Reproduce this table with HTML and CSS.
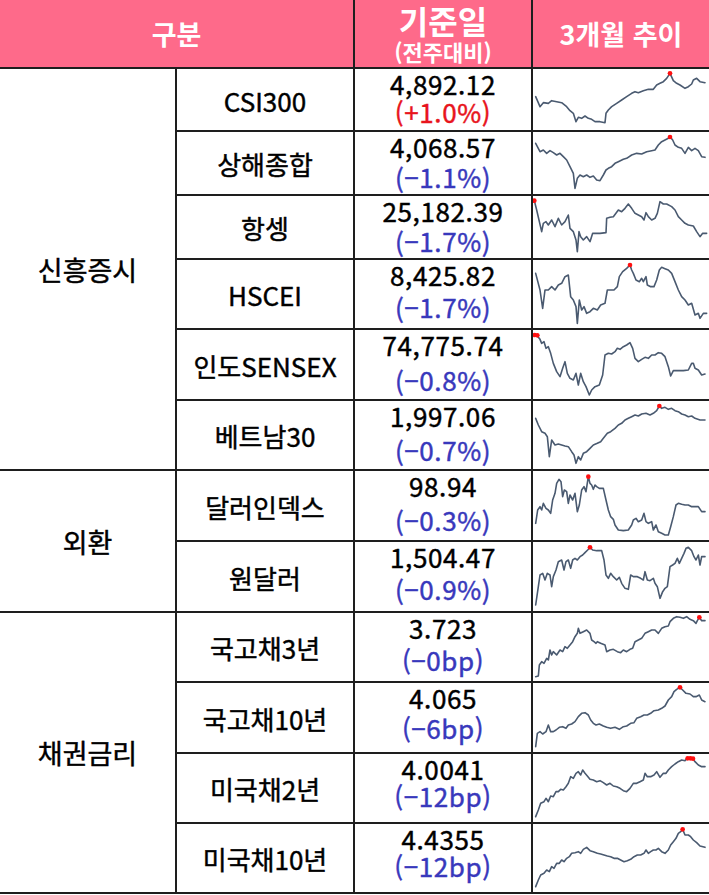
FILE: index.html
```html
<!DOCTYPE html>
<html lang="ko">
<head>
<meta charset="utf-8">
<title>주간 시장 동향</title>
<link rel="stylesheet" href="styles.css">
</head>
<body>
<div class="grid">
  <div class="h h-cat">구분</div>
  <div class="h h-date"><span class="main">기준일</span><span class="sub">(전주대비)</span></div>
  <div class="h">3개월 추이</div>

  <div class="cat cat-eq">신흥증시</div>
  <div class="cat cat-fx">외환</div>
  <div class="cat cat-bond">채권금리</div>

  <!-- row 1 -->
  <div class="name">CSI300</div>
  <div class="val"><span>4,892.12</span><span class="chg up g-28">(+1.0%)</span></div>
  <div class="spark"><svg viewBox="519 27 528 183" preserveAspectRatio="none"><polyline points="527,110 540,140 550,128 565,130 575,122 590,125 605,128 620,140 630,152 640,160 648,185 655,172 665,175 675,168 685,175 695,178 705,185 720,185 735,188 738,160 745,150 755,140 770,130 785,120 800,110 815,100 825,95 835,98 850,92 865,88 880,88 890,75 900,70 910,65 920,55 930,40 940,62 950,70 960,75 975,85 985,80 995,72 1000,60 1010,55 1020,65 1035,68"/><circle cx="930" cy="40" r="7"/></svg></div>

  <!-- row 2 -->
  <div class="name">상해종합</div>
  <div class="val"><span>4,068.57</span><span class="chg dn">(−1.1%)</span></div>
  <div class="spark"><svg viewBox="519 216 528 186" preserveAspectRatio="none"><polyline points="527,250 540,275 550,270 560,280 570,272 580,278 590,285 600,280 610,290 620,300 630,320 640,340 645,385 652,355 660,345 670,350 680,345 690,352 700,348 710,360 720,362 730,345 738,330 745,325 755,320 765,310 775,305 790,298 800,295 815,285 830,280 845,282 860,275 875,272 885,270 895,255 905,245 915,240 925,235 930,230 938,240 945,255 955,262 965,265 975,280 985,262 995,272 1005,265 1015,272 1025,290 1035,292"/><circle cx="930" cy="231" r="7"/></svg></div>

  <!-- row 3 -->
  <div class="name">항셍</div>
  <div class="val"><span>25,182.39</span><span class="chg dn">(−1.7%)</span></div>
  <div class="spark"><svg viewBox="519 18 528 186" preserveAspectRatio="none"><polyline points="523,32 530,60 545,125 550,100 558,95 565,105 575,90 585,110 595,85 605,105 615,95 625,75 630,115 640,125 648,150 652,185 657,125 662,140 670,150 680,140 690,155 698,130 708,130 720,130 738,128 740,85 750,82 760,80 775,60 785,65 795,55 805,42 815,55 825,70 835,75 845,80 852,90 858,68 865,80 875,90 885,85 892,70 900,35 910,42 920,42 935,50 945,60 955,80 965,90 975,100 985,105 1000,108 1010,125 1020,140 1028,130 1040,130"/><circle cx="523" cy="32" r="7"/></svg></div>

  <!-- row 4 -->
  <div class="name">HSCEI</div>
  <div class="val"><span>8,425.82</span><span class="chg dn g-32">(−1.7%)</span></div>
  <div class="spark"><svg viewBox="519 210 528 204" preserveAspectRatio="none"><polyline points="527,250 540,300 548,355 555,300 565,300 575,290 585,300 595,285 605,280 615,260 625,255 632,320 640,330 648,350 652,400 658,330 665,360 672,350 680,370 690,365 700,355 712,360 722,345 735,340 742,300 752,300 762,300 772,290 778,260 788,245 800,235 810,225 815,240 820,250 828,270 838,275 845,265 850,275 858,260 862,285 872,290 882,290 890,270 898,240 905,232 915,236 925,240 935,250 945,275 955,300 965,320 975,330 985,345 995,340 1005,375 1015,370 1020,385 1030,370 1040,370"/><circle cx="810" cy="225" r="7"/></svg></div>

  <!-- row 5 -->
  <div class="name">인도SENSEX</div>
  <div class="val"><span>74,775.74</span><span class="chg dn g-35">(−0.8%)</span></div>
  <div class="spark"><svg viewBox="519 30 528 207" preserveAspectRatio="none"><polyline points="522,45 532,48 540,58 545,70 552,65 558,85 565,80 572,100 580,130 590,155 600,170 608,145 615,125 622,160 630,175 640,180 648,160 655,195 662,160 670,185 678,200 688,225 695,210 705,200 718,195 728,165 735,105 745,100 755,102 765,95 772,85 780,88 790,80 800,75 810,68 818,85 825,115 835,125 845,118 855,112 865,115 875,105 885,105 895,98 905,100 915,110 925,140 932,168 940,152 955,152 970,152 985,150 995,130 1000,130 1005,145 1015,150 1025,165 1035,162"/><circle cx="524" cy="45" r="7"/><circle cx="532" cy="46" r="7"/></svg></div>

  <!-- row 6 -->
  <div class="name">베트남30</div>
  <div class="val"><span>1,997.06</span><span class="chg dn g-34">(−0.7%)</span></div>
  <div class="spark"><svg viewBox="519 243 528 204" preserveAspectRatio="none"><polyline points="527,295 535,315 545,335 555,340 562,350 568,410 575,360 585,375 595,372 605,375 615,378 625,380 635,395 642,405 648,430 655,410 662,420 670,400 680,395 690,385 700,375 712,370 722,365 730,355 742,340 752,335 765,325 775,315 785,310 795,300 805,295 815,290 825,285 835,288 845,282 858,280 870,285 880,280 890,272 898,258 905,265 915,262 925,268 935,265 945,272 955,275 965,282 975,285 985,290 995,288 1005,295 1020,300 1035,300"/><circle cx="898" cy="258" r="7"/></svg></div>

  <!-- row 7 -->
  <div class="name">달러인덱스</div>
  <div class="val"><span>98.94</span><span class="chg dn g-34">(−0.3%)</span></div>
  <div class="spark"><svg viewBox="519 33 528 207" preserveAspectRatio="none"><polyline points="527,190 533,150 540,140 545,150 550,130 558,145 565,150 572,160 578,120 585,100 590,70 597,58 603,65 608,110 613,90 620,95 625,130 630,105 638,120 645,100 652,155 658,135 665,90 672,80 678,95 685,50 690,70 695,75 700,88 705,75 710,80 718,85 730,85 738,120 745,150 752,170 760,178 765,195 775,210 790,212 805,210 815,195 820,180 828,175 835,185 845,180 852,160 858,185 865,190 875,185 880,210 888,195 895,215 905,220 915,225 925,225 932,200 940,170 948,135 955,130 965,133 975,135 985,135 995,140 1005,140 1015,140 1025,155 1035,155"/><circle cx="685" cy="50" r="7"/></svg></div>

  <!-- row 8 -->
  <div class="name">원달러</div>
  <div class="val"><span>1,504.47</span><span class="chg dn g-32">(−0.9%)</span></div>
  <div class="spark"><svg viewBox="519 246 528 207" preserveAspectRatio="none"><polyline points="527,435 535,380 540,345 548,340 555,360 562,340 570,345 575,380 580,350 588,330 595,305 605,300 612,330 618,305 625,300 632,325 638,300 645,295 652,300 660,290 668,285 675,278 683,270 690,262 698,270 710,272 725,272 732,300 738,345 745,355 752,340 760,350 770,360 778,352 785,370 795,385 805,388 812,345 820,350 832,350 842,355 850,360 855,335 862,360 870,362 880,355 885,370 892,380 900,415 908,395 915,385 922,380 930,320 938,315 945,310 952,295 958,310 965,295 972,280 978,265 985,262 995,272 1002,290 1008,300 1015,285 1020,315 1025,290 1035,290"/><circle cx="690" cy="262" r="7"/></svg></div>

  <!-- row 9 -->
  <div class="name">국고채3년</div>
  <div class="val"><span>3.723</span><span class="chg dn g-32">(−0bp)</span></div>
  <div class="spark"><svg viewBox="519 39 528 204" preserveAspectRatio="none"><polyline points="527,230 535,228 538,195 545,185 552,190 560,175 565,180 570,150 575,165 580,155 590,165 600,150 608,155 615,140 622,145 630,135 638,125 645,110 652,100 655,85 660,100 670,95 680,90 690,100 695,120 702,125 708,130 712,125 722,130 735,135 740,155 750,150 760,148 772,155 782,158 790,150 800,155 810,148 818,145 825,125 835,120 845,115 855,100 865,95 875,90 885,90 895,100 905,85 915,80 925,78 930,65 940,55 950,50 960,52 970,55 980,50 990,58 1000,62 1008,70 1012,62 1018,52 1025,62 1035,62"/><circle cx="1018" cy="52" r="7"/></svg></div>

  <!-- row 10 -->
  <div class="name">국고채10년</div>
  <div class="val"><span>4.065</span><span class="chg dn">(−6bp)</span></div>
  <div class="spark"><svg viewBox="519 249 528 207" preserveAspectRatio="none"><polyline points="527,440 532,400 540,395 548,402 558,395 565,375 572,395 580,395 588,390 598,382 608,380 618,385 625,375 635,372 645,365 655,350 665,340 675,338 685,345 692,360 700,370 708,375 718,372 730,378 740,382 752,385 765,382 778,388 790,380 800,378 812,370 822,368 830,355 842,350 852,345 862,345 872,340 882,332 895,330 905,325 915,318 925,300 935,290 942,275 950,268 960,262 968,270 978,280 990,282 1000,290 1008,290 1018,285 1025,300 1035,305"/><circle cx="960" cy="262" r="7"/></svg></div>

  <!-- row 11 -->
  <div class="name">미국채2년</div>
  <div class="val"><span>4.0041</span><span class="chg dn g-27">(−12bp)</span></div>
  <div class="spark"><svg viewBox="519 42 528 204" preserveAspectRatio="none"><polyline points="527,230 535,210 542,190 552,185 558,175 565,185 572,168 580,170 588,155 595,155 602,148 610,150 618,140 625,130 632,110 640,115 648,100 655,95 662,105 668,90 675,100 682,108 690,118 700,120 710,125 720,122 730,128 740,135 750,130 760,138 770,140 780,145 790,152 800,155 810,145 820,130 830,130 840,125 850,120 855,100 862,110 872,110 882,105 890,95 900,112 910,100 918,100 925,90 935,80 945,72 955,65 965,60 975,62 982,55 988,55 995,55 1000,58 1005,65 1015,75 1025,80 1035,80"/><circle cx="983" cy="55" r="7"/><circle cx="991" cy="55" r="7"/><circle cx="999" cy="56" r="7"/></svg></div>

  <!-- row 12 -->
  <div class="name">미국채10년</div>
  <div class="val"><span>4.4355</span><span class="chg dn g-27">(−12bp)</span></div>
  <div class="spark"><svg viewBox="519 252 528 204" preserveAspectRatio="none"><polyline points="527,440 535,420 542,405 552,400 560,390 568,395 575,380 582,385 590,370 598,370 605,360 612,365 620,355 628,350 635,340 645,338 655,335 662,340 670,328 680,322 690,332 700,335 712,340 722,342 732,345 742,348 752,350 762,355 772,355 782,360 792,365 802,362 812,358 822,350 832,345 842,345 852,340 858,330 865,340 872,335 880,330 888,330 895,325 905,335 915,340 925,330 932,315 940,305 948,295 955,280 962,275 968,268 975,285 985,285 992,290 1000,300 1010,308 1020,318 1035,322"/><circle cx="968" cy="268" r="7"/></svg></div>
</div>
</body>
</html>
```

FILE: styles.css
```css
html, body {
  margin: 0;
  padding: 0;
  background: #ffffff;
}

body {
  font-family: "Noto Sans CJK KR", "Noto Sans", sans-serif;
  font-weight: 400;
  color: #000000;
}

.grid {
  display: grid;
  grid-template-columns: 175px 176px 176px 176px;
  grid-template-rows: 67px 61px 62px 62px 68px 69px 68px 69px 69px 68px 69px 68px 68px;
  gap: 2px;
  width: 709px;
  background: #1e1e1e;
  padding-bottom: 2px;
}

.grid > div {
  background: #ffffff;
  display: flex;
  align-items: center;
  justify-content: center;
}

.grid > .h {
  background: #fe6a8a;
  color: #ffffff;
  font-weight: 700;
  font-size: 27px;
  line-height: 30px;
}

.grid > .h-cat {
  grid-column: 1 / 3;
}

.grid > .h-date {
  flex-direction: column;
  justify-content: flex-start;
  padding-top: 2px;
}

.h-date .main {
  font-size: 32px;
  line-height: 36px;
}

.h-date .sub {
  font-size: 22px;
  line-height: 26px;
}

.grid > .cat,
.grid > .name,
.grid > .val {
  -webkit-text-stroke: 0.45px currentColor;
}

.grid > .cat {
  grid-column: 1;
  font-size: 27px;
}

.grid > .cat-eq { grid-row: 2 / 8; }
.grid > .cat-fx { grid-row: 8 / 10; }
.grid > .cat-bond { grid-row: 10 / 14; }

.grid > .name {
  font-size: 26px;
  padding-top: 1px;
}

.grid > .val {
  flex-direction: column;
  justify-content: flex-start;
  font-size: 26px;
  line-height: 30px;
  letter-spacing: 0.6px;
}

.chg.up { color: #e8141c; }
.chg.dn { color: #3838bc; }

.chg.g-27 { margin-top: -3px; }
.chg.g-28 { margin-top: -2px; }
.chg.g-32 { margin-top: 2px; }
.chg.g-34 { margin-top: 4px; }
.chg.g-35 { margin-top: 5px; }

.grid > .spark {
  display: block;
}

.spark svg {
  display: block;
  width: 100%;
  height: 100%;
}

.spark polyline {
  fill: none;
  stroke: #4a5a70;
  stroke-width: 4.8;
  stroke-linejoin: round;
  stroke-linecap: round;
}

.spark circle {
  fill: #ff1010;
}
```
